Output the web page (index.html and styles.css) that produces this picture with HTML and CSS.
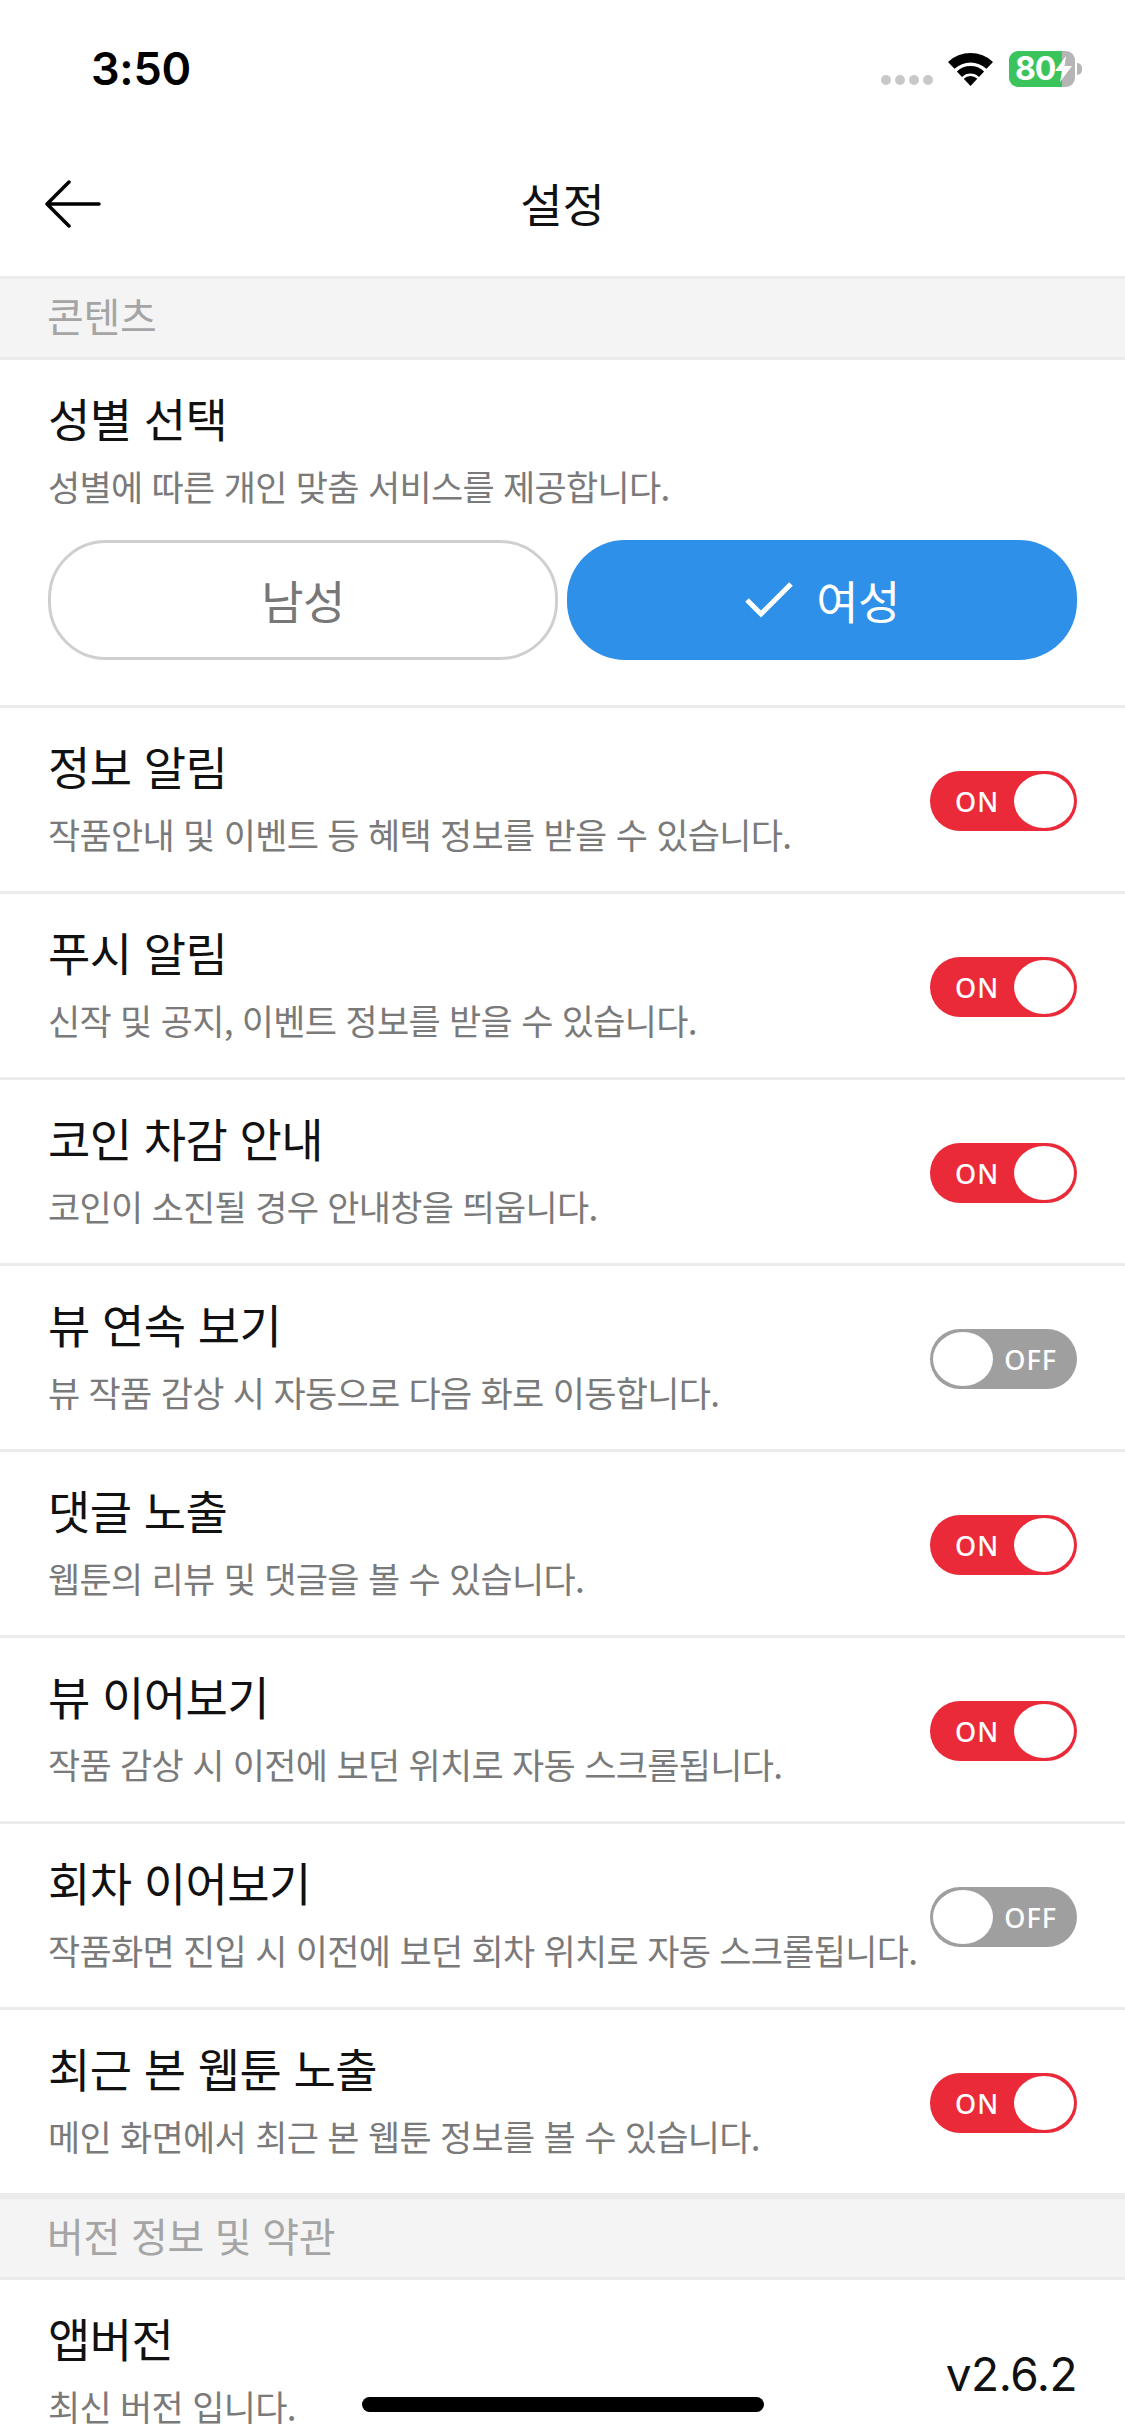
FILE: index.html
```html
<!DOCTYPE html>
<html lang="ko">
<head>
<meta charset="utf-8">
<title>설정</title>
<link rel="stylesheet" href="styles.css">
</head>
<body>
<div class="screen">
  <div class="status">
    <span class="time">3:50</span>
    <div class="status-right">
      <div class="dots"><i></i><i></i><i></i><i></i></div>
      <svg class="wifi" width="45" height="33" viewBox="0 0 45 33"><path d="M22.500 33 L15.700 25.700 A10 10 0 0 1 29.300 25.700 Z" fill="#000"/><path d="M14 23.900 L8.900 18.400 A20 20 0 0 1 36.100 18.400 L31 23.900 A12.500 12.500 0 0 0 14 23.900 Z" fill="#000"/><path d="M6.500 15.800 L0 8.900 A33 33 0 0 1 45 8.900 L38.500 15.800 A23.500 23.500 0 0 0 6.500 15.800 Z" fill="#000"/></svg>
      <div class="battery"><span>80</span><svg class="bolt" width="17" height="26" viewBox="0 0 17 26"><path d="M11 0 L0 15 H7 L5 26 L17 10 H9.500 Z" fill="#fff"/></svg></div><div class="nub"></div>
    </div>
  </div>
  <div class="nav">
    <svg class="back" width="56" height="48" viewBox="0 0 56 48"><path d="M54 24 H2 M24 2 L2 24 L24 46" fill="none" stroke="#000" stroke-width="3.500" stroke-linecap="round" stroke-linejoin="round"/></svg>
    <div class="nav-title">설정</div>
  </div>
  <div class="section">콘텐츠</div>
  <div class="gender">
    <div class="t">성별 선택</div>
    <div class="d">성별에 따른 개인 맞춤 서비스를 제공합니다.</div>
    <div class="gender-btns">
      <div class="gbtn male">남성</div>
      <div class="gbtn female"><svg width="50" height="38" viewBox="0 0 50 38"><path d="M3 20 L17 34 L47 4" fill="none" stroke="#fff" stroke-width="5"/></svg>여성</div>
    </div>
  </div>
  <div class="row"><div><div class="t">정보 알림</div><div class="d">작품안내 및 이벤트 등 혜택 정보를 받을 수 있습니다.</div></div><div class="sw on"><span>ON</span><b></b></div></div>
  <div class="row"><div><div class="t">푸시 알림</div><div class="d">신작 및 공지, 이벤트 정보를 받을 수 있습니다.</div></div><div class="sw on"><span>ON</span><b></b></div></div>
  <div class="row"><div><div class="t">코인 차감 안내</div><div class="d">코인이 소진될 경우 안내창을 띄웁니다.</div></div><div class="sw on"><span>ON</span><b></b></div></div>
  <div class="row"><div><div class="t">뷰 연속 보기</div><div class="d">뷰 작품 감상 시 자동으로 다음 화로 이동합니다.</div></div><div class="sw off"><b></b><span>OFF</span></div></div>
  <div class="row"><div><div class="t">댓글 노출</div><div class="d">웹툰의 리뷰 및 댓글을 볼 수 있습니다.</div></div><div class="sw on"><span>ON</span><b></b></div></div>
  <div class="row"><div><div class="t">뷰 이어보기</div><div class="d">작품 감상 시 이전에 보던 위치로 자동 스크롤됩니다.</div></div><div class="sw on"><span>ON</span><b></b></div></div>
  <div class="row"><div><div class="t">회차 이어보기</div><div class="d">작품화면 진입 시 이전에 보던 회차 위치로 자동 스크롤됩니다.</div></div><div class="sw off"><b></b><span>OFF</span></div></div>
  <div class="row"><div><div class="t">최근 본 웹툰 노출</div><div class="d">메인 화면에서 최근 본 웹툰 정보를 볼 수 있습니다.</div></div><div class="sw on"><span>ON</span><b></b></div></div>
  <div class="section">버전 정보 및 약관</div>
  <div class="row last"><div><div class="t">앱버전</div><div class="d">최신 버전 입니다.</div></div><div class="version">v2.6.2</div></div>
  <div class="home"></div>
</div>
</body>
</html>
```
FILE: styles.css
```css
* { box-sizing: border-box; }
html, body { margin: 0; padding: 0; background: #fff; }
body { font-family: "Noto Sans CJK KR", "Liberation Sans", sans-serif; }
.screen { position: relative; width: 1125px; height: 2436px; overflow: hidden; background: #fff; }
.status { height: 132px; display: flex; justify-content: space-between; align-items: flex-start; padding: 42px 43px 0 91px; }
.time { font-family: Inter, "Liberation Sans", sans-serif; font-weight: 600; font-size: 45px; line-height: 54px; color: #000; letter-spacing: -0.3px; }
.status-right { display: flex; align-items: center; height: 36px; margin-top: 9px; }
.dots { display: flex; gap: 4px; margin-right: 15px; margin-top: 22px; }
.dots i { display: block; width: 10px; height: 10px; border-radius: 50%; background: #c8c8c8; }
.wifi { margin-right: 16px; }
.battery { position: relative; width: 66px; height: 36px; border-radius: 9px; background: linear-gradient(90deg, #3cc45c 53px, #b5b5b5 53px); color: #fff; font-family: Inter, "Liberation Sans", sans-serif; font-weight: 700; font-size: 32px; line-height: 36px; padding-left: 6px; letter-spacing: -1px; }
.bolt { position: absolute; left: 46px; top: 5px; }
.nub { width: 5px; height: 12px; background: #b5b5b5; border-radius: 0 6px 6px 0; margin-left: 2px; }
.nav { position: relative; height: 144px; display: flex; align-items: center; justify-content: center; padding-bottom: 4px; }
.back { position: absolute; left: 45px; top: 48px; }
.nav-title { font-size: 46px; line-height: 60px; color: #111; }
.section { height: 84px; background: #f4f4f4; border-top: 3px solid #ebebeb; border-bottom: 3px solid #ebebeb; padding-left: 47px; font-size: 40px; line-height: 72px; color: #a5a5a5; letter-spacing: -0.3px; }
.t { font-size: 46px; line-height: 60px; color: #111; letter-spacing: -0.6px; }
.d { font-size: 35px; line-height: 50px; color: #7a7a7a; white-space: nowrap; letter-spacing: -0.7px; margin-top: 14px; }
.gender { height: 348px; padding: 27px 48px 0; border-bottom: 3px solid #ebebeb; }
.gender-btns { display: flex; justify-content: space-between; margin-top: 29px; }
.gbtn { width: 510px; height: 120px; border-radius: 58px; display: flex; align-items: center; justify-content: center; font-size: 46px; letter-spacing: -0.6px; padding-bottom: 2px; }
.male { border: 3px solid #cfcfcf; color: #777; }
.female { background: #2e90e8; color: #fff; gap: 22px; }
.row { height: 186px; padding: 27px 48px 0; display: flex; justify-content: space-between; align-items: flex-start; border-bottom: 3px solid #ebebeb; }
.row.last { border-bottom: none; }
.sw { width: 147px; height: 60px; margin-top: 36px; border-radius: 30px; display: flex; align-items: center; justify-content: space-between; color: #fff; font-family: "Noto Sans", "Liberation Sans", sans-serif; font-weight: 500; font-size: 27px; letter-spacing: 1px; flex: none; }
.sw b { width: 60px; height: 54px; border-radius: 50%; background: #fff; display: block; }
.on { background: #eb2a39; padding: 0 3px 0 25px; }
.off { background: #9f9f9f; padding: 0 20px 0 3px; }
.version { font-family: Inter, "Liberation Sans", sans-serif; font-size: 46px; line-height: 56px; margin-top: 39px; color: #111; letter-spacing: -0.5px; }
.home { position: absolute; left: 362px; bottom: 24px; width: 402px; height: 15px; border-radius: 8px; background: #000; }
```
